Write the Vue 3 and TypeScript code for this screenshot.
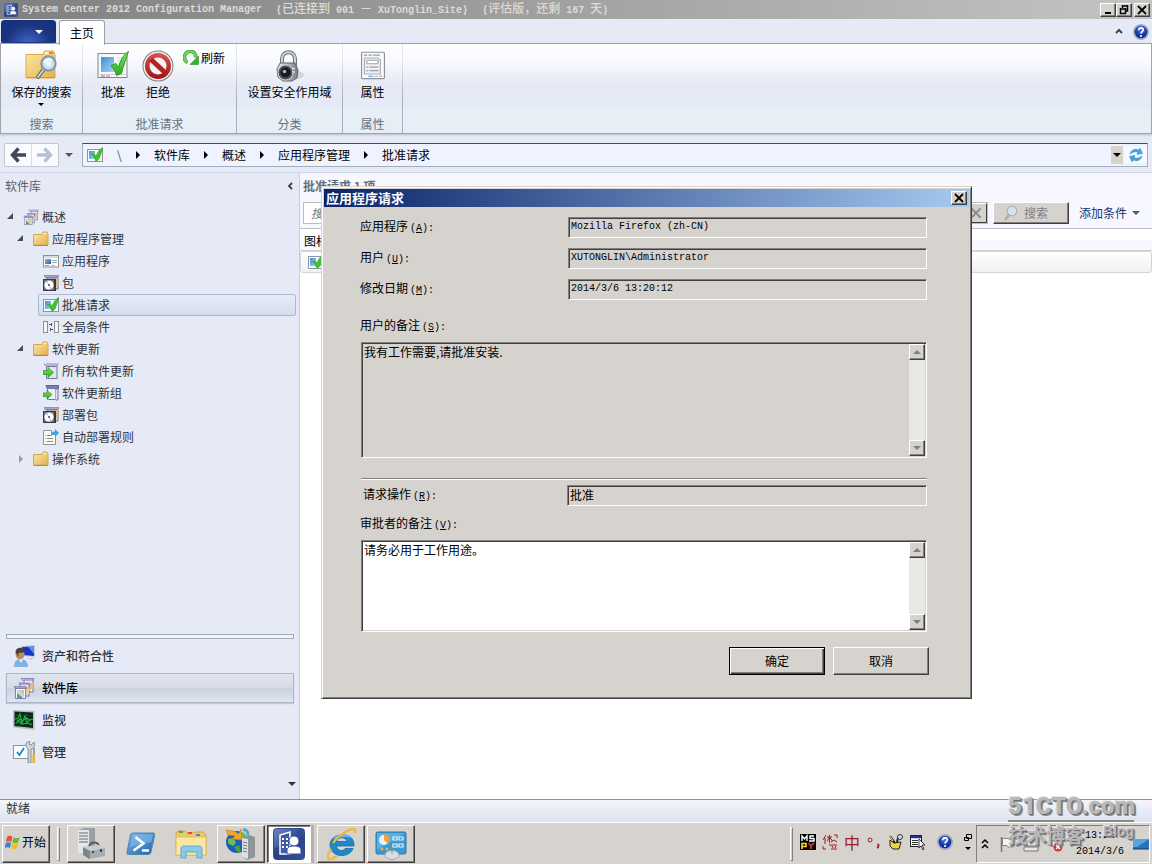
<script setup lang="ts">
interface TreeNode {
  label: string
  icon: string
  level: number
  state?: 'open' | 'closed'
  selected?: boolean
}

const tree: TreeNode[] = [
  { label: '概述', icon: 'library', level: 0, state: 'open' },
  { label: '应用程序管理', icon: 'folder', level: 1, state: 'open' },
  { label: '应用程序', icon: 'application', level: 2 },
  { label: '包', icon: 'package', level: 2 },
  { label: '批准请求', icon: 'approvesmall', level: 2, selected: true },
  { label: '全局条件', icon: 'condition', level: 2 },
  { label: '软件更新', icon: 'folder', level: 1, state: 'open' },
  { label: '所有软件更新', icon: 'update', level: 2 },
  { label: '软件更新组', icon: 'updategroup', level: 2 },
  { label: '部署包', icon: 'package', level: 2 },
  { label: '自动部署规则', icon: 'rule', level: 2 },
  { label: '操作系统', icon: 'folder', level: 1, state: 'closed' },
]

const workspaces = [
  { label: '资产和符合性', icon: 'assets', selected: false },
  { label: '软件库', icon: 'library', selected: true },
  { label: '监视', icon: 'monitor', selected: false },
  { label: '管理', icon: 'admin', selected: false },
]

const crumbs = ['软件库', '概述', '应用程序管理', '批准请求']

const tasks = [
  { label: '服务器管理器', icon: 'server', style: 'raised' },
  { label: 'PowerShell', icon: 'powershell', style: 'flat' },
  { label: '资源管理器', icon: 'explorer', style: 'flat' },
  { label: 'IIS', icon: 'iis', style: 'raised' },
  { label: 'Configuration Manager', icon: 'console', style: 'pressed' },
  { label: 'Internet Explorer', icon: 'ie', style: 'raised' },
  { label: '控制面板', icon: 'control', style: 'raised' },
]

const details = [
  { id: 'f-app', label: '应用程序', key: 'A', value: 'Mozilla Firefox (zh-CN)' },
  { id: 'f-user', label: '用户', key: 'U', value: 'XUTONGLIN\\Administrator' },
  { id: 'f-date', label: '修改日期', key: 'M', value: '2014/3/6 13:20:12' },
]
</script>

<template>
  <div class="screen">
    <svg class="defs" width="0" height="0" aria-hidden="true">
      <defs>
        <linearGradient id="gFolder" x1="0" y1="0" x2="1" y2="1">
          <stop offset="0" stop-color="#fde9a4" /><stop offset="1" stop-color="#e2b04e" />
        </linearGradient>
        <linearGradient id="gBlue" x1="0" y1="0" x2="1" y2="1">
          <stop offset="0" stop-color="#7db8ee" /><stop offset="1" stop-color="#1d62a8" />
        </linearGradient>
        <linearGradient id="gPane" x1="0" y1="0" x2="1" y2="1">
          <stop offset="0" stop-color="#3f8fd8" /><stop offset="1" stop-color="#a8d2f2" />
        </linearGradient>
        <linearGradient id="gNavy" x1="0" y1="0" x2="1" y2="1">
          <stop offset="0" stop-color="#6f88c0" /><stop offset="0.5" stop-color="#2f4b94" /><stop offset="1" stop-color="#4b6fb8" />
        </linearGradient>
        <linearGradient id="gGreen" x1="0" y1="0" x2="0" y2="1">
          <stop offset="0" stop-color="#84e850" /><stop offset="1" stop-color="#2aa824" />
        </linearGradient>
        <linearGradient id="gSteel" x1="0" y1="0" x2="1" y2="0">
          <stop offset="0" stop-color="#eef0f1" /><stop offset="0.5" stop-color="#b4babf" /><stop offset="1" stop-color="#747c84" />
        </linearGradient>
        <linearGradient id="gRed" x1="0" y1="0" x2="0" y2="1">
          <stop offset="0" stop-color="#d85450" /><stop offset="1" stop-color="#a01414" />
        </linearGradient>
        <radialGradient id="gLens"><stop offset="0" stop-color="#ffffff" /><stop offset="1" stop-color="#a9cdea" /></radialGradient>
        <radialGradient id="gHelp" cx="0.5" cy="0.3"><stop offset="0" stop-color="#4d7bea" /><stop offset="1" stop-color="#12309a" /></radialGradient>
      </defs>
      <symbol id="folder" viewBox="0 0 16 16">
        <path d="M.5 3.500h8.500l1-2.500h4l1 2.500V14H.5z" fill="url(#gFolder)" stroke="#d1a75a" />
        <path d="M10.500 2.500h3" stroke="#fff5d0" /><path d="M.5 14.500h14.500" stroke="#b98c3e" />
      </symbol>
      <symbol id="foldersearch" viewBox="0 0 32 32">
        <path d="M1 4.500h17l1.500-3.500h9l1.500 3.500V28H1z" fill="url(#gFolder)" stroke="#d9a94c" />
        <path d="M20 3h4" stroke="#fff3c8" stroke-width="2" /><path d="M24 3h4" stroke="#d8892e" stroke-width="2" /><path d="M2 27.500h27" stroke="#c79a4a" />
        <path d="M18.500 19.500L13 27" stroke="#70747a" stroke-width="4" stroke-linecap="round" />
        <path d="M18.500 19.500L13 27" stroke="#d9dcdf" stroke-width="1.500" stroke-linecap="round" />
        <circle cx="23.500" cy="13.500" r="7.200" fill="url(#gLens)" stroke="#8395ac" stroke-width="2" />
        <path d="M19.500 13a4.500 4.500 0 0 1 7-3" fill="none" stroke="#fff" stroke-width="2" />
      </symbol>
      <symbol id="approve" viewBox="0 0 32 32">
        <rect x="1" y="3.500" width="29" height="24" fill="#f7f8fa" stroke="#80868e" />
        <rect x="4" y="7" width="13" height="15" fill="url(#gPane)" />
        <path d="M20 8h6M20 11h4" stroke="#d6d9de" />
        <path d="M3 24.500h26" stroke="#cfd3d8" /><path d="M4 26h4" stroke="#9aa0a8" stroke-width="1.500" /><path d="M9 26h4" stroke="#e79a9a" stroke-width="1.500" />
        <path d="M14 15.500l5-2 2.500 4C23 11 26 5 31.500 1.500c-2 6-5 13.500-7 22l-5 2c-1-4-3-7-5.500-10z" fill="url(#gGreen)" stroke="#2a9c1e" />
      </symbol>
      <symbol id="approvesmall" viewBox="0 0 16 16">
        <rect x="0.500" y="2.500" width="15" height="12" fill="#fafbfc" stroke="#9096a0" />
        <rect x="2" y="4" width="6" height="8" fill="url(#gPane)" />
        <path d="M4.500 7.500l3-.5 1.500 2.500C10.500 5.500 12.500 2 15.800.5 15 4 13.500 8 12 12L9 14.500C8 11.500 6.500 9.500 4.500 7.500z" fill="#3fc331" stroke="#2fa824" stroke-width="0.700" />
      </symbol>
      <symbol id="deny" viewBox="0 0 32 32">
        <circle cx="16" cy="16" r="15.500" fill="#7d7d80" /><circle cx="16" cy="16" r="14.500" fill="#f0eeee" />
        <circle cx="16" cy="16" r="13" fill="url(#gRed)" /><circle cx="16" cy="16" r="8.500" fill="#f4f4f8" />
        <path d="M9 9.500L23 22.500" stroke="#b82020" stroke-width="5" />
      </symbol>
      <symbol id="refresh" viewBox="0 0 16 16">
        <path d="M4.500 12.800C-1 9 1.500 1.500 7.500 1.500c3.500 0 5.500 2.500 5.300 6" fill="none" stroke="#3ea534" stroke-width="3.600" />
        <path d="M4.500 12.800C-1 9 1.500 1.500 7.500 1.500c3.500 0 5.500 2.500 5.300 6" fill="none" stroke="#6fd858" stroke-width="2" />
        <path d="M15.500 6v8.500H7z" fill="#35b42a" stroke="#2a9422" stroke-width="0.600" />
      </symbol>
      <symbol id="lock" viewBox="0 0 32 32">
        <ellipse cx="23" cy="25" rx="8" ry="4" fill="#b8bcc8" opacity="0.500" />
        <path d="M9 17V9c0-9 13-9 13 0v8" fill="none" stroke="#6a737a" stroke-width="4" /><path d="M9 17V9c0-9 13-9 13 0v8" fill="none" stroke="#cdd5d8" stroke-width="2" />
        <path d="M7 13h15l3 7-1 8-5 3h-9l-5-4-1-8z" fill="url(#gSteel)" stroke="#5e676e" />
        <circle cx="12.500" cy="22.500" r="7.500" fill="#4a5056" stroke="#cdd2d6" /><circle cx="12.500" cy="22.500" r="5" fill="#171b1f" />
        <circle cx="11.500" cy="21.500" r="1.800" fill="#aeb5bb" /><path d="M19 18l3 1M19 22h3" stroke="#f2f4f5" />
      </symbol>
      <symbol id="props" viewBox="0 0 24 28">
        <rect x="2" y="2" width="20" height="23" rx="1" fill="#fafafb" stroke="#8d9196" />
        <path d="M4 4.500h3M8 4.500h3M12 4.500h6" stroke="#9aa0a6" />
        <path d="M4.500 7h12l2 2v12h-14z" fill="#eff1f3" stroke="#a9aeb4" />
        <rect x="6.500" y="9" width="10" height="3" rx="1" fill="#fff" stroke="#9aa0a6" />
        <path d="M6 15h2M6 18h2" stroke="#7fb6cf" /><path d="M9 15h8M9 18h8" stroke="#9aa0a6" />
        <path d="M8 23h4" stroke="#36b4dd" /><path d="M13 23h3M17 23h3" stroke="#c9a0a0" />
      </symbol>
      <symbol id="library" viewBox="0 0 22 22">
        <path d="M10 4l-2-3M20 4l1-3M9 1.500h12" stroke="#8a88c0" fill="none" /><rect x="11" y="3" width="9" height="12" fill="#e9e6f2" stroke="#7a78b4" /><path d="M14 6h6v6h-4z" fill="#e9bd76" />
        <path d="M5 5.500h12l1 2H6z" fill="#a3a1d0" /><rect x="7" y="7" width="9" height="12" fill="#e3e0f0" stroke="#7a78b4" /><path d="M11 10h5v7h-3z" fill="#efc98c" />
        <path d="M1 9.500h12l1 2H2z" fill="#a3a1d0" stroke="#7472ac" stroke-width="0.600" /><rect x="2.500" y="11.500" width="10" height="10" fill="#f8f7fb" stroke="#8280ba" />
        <path d="M4 13h7v7H4z" fill="#c2d9ec" /><path d="M7 13h4v6z" fill="#f2bd55" /><path d="M4 16l6 5H4z" fill="#58a660" />
      </symbol>
      <symbol id="application" viewBox="0 0 16 16">
        <rect x="0.500" y="2.500" width="15" height="11.500" fill="#fcfcfd" stroke="#8b9099" /><path d="M1 4h14" stroke="#b4bac2" />
        <rect x="2" y="6" width="6" height="5" fill="url(#gBlue)" /><path d="M9 7.500h5M9 9.500h5" stroke="#a6abb2" /><path d="M2 12.500h4" stroke="#57b5d5" /><path d="M8 12.500h4" stroke="#b9bec5" />
      </symbol>
      <symbol id="package" viewBox="0 0 16 16">
        <path d="M1 .5h15l-1 2H2z" fill="#a6a5cc" stroke="#6f6e9c" stroke-width="0.600" /><path d="M4 3h11v11H4z" fill="#d5dbe4" stroke="#6f6e8e" /><path d="M12 3h3v8h-3z" fill="#e9b85c" />
        <rect x="0.500" y="4.500" width="11" height="11" fill="#6f7a84" stroke="#3b3b3e" /><path d="M12.500 4v12" stroke="#333" />
        <circle cx="6" cy="10" r="4.600" fill="#fff" /><path d="M6 10L3 7l1.500-1z" fill="#9acdee" /><path d="M6 10l3 3.500-2 1z" fill="#e9b6d8" /><circle cx="6" cy="10" r="1" fill="#4c4c4c" />
      </symbol>
      <symbol id="condition" viewBox="0 0 16 16">
        <rect x="0.500" y="2.500" width="4" height="11" fill="#f4f5f7" stroke="#8b9097" /><rect x="11.500" y="2.500" width="4" height="11" fill="#f4f5f7" stroke="#8b9097" />
        <path d="M6 5.500h3M8.500 4v3M10 10.500H7M7.500 9v3" stroke="#55595f" fill="none" />
      </symbol>
      <symbol id="update" viewBox="0 0 16 16">
        <path d="M1 .5l2 2.500h11l1.500-2.500M3 1h11" stroke="#8482b0" fill="none" /><path d="M3.500 3.500h10.500v12H3.500z" fill="#dfe4ee" stroke="#78769e" />
        <path d="M0 7.500h5V4.500L10.500 9.500 5 14.500V11.500H0z" fill="url(#gGreen)" stroke="#2f962a" stroke-width="0.700" />
      </symbol>
      <symbol id="updategroup" viewBox="0 0 16 16">
        <path d="M3 .5h12.500v3H4z" fill="#7a79b8" stroke="#64639a" /><path d="M4.500 3.500h8v11h-8z" fill="#edf0f6" stroke="#78769e" /><path d="M12.500 4h2.500v11h-2.500" fill="#dfe4ee" stroke="#78769e" />
        <path d="M0 8h4V5.500L9 9.500 4 14V11.500H0z" fill="url(#gGreen)" stroke="#2f962a" stroke-width="0.700" />
      </symbol>
      <symbol id="rule" viewBox="0 0 16 16">
        <path d="M.5 1.500h8v4h4v10H.5z" fill="#fdfdf8" stroke="#8f9499" /><path d="M4 6.500h4M4 9.500h6M4 12.500h6" stroke="#8c8b78" /><path d="M2 6.500h1M2 9.500h1M2 12.500h1" stroke="#d3b43c" />
        <path d="M8 7.500c0-3.500 1-5 4-5V0l4 4-4 4V5.500c-2 0-3 0-4 2z" fill="#3fa4e4" />
      </symbol>
      <symbol id="assets" viewBox="0 0 22 22">
        <path d="M8 1l14-1v12l-13-1z" fill="#c3ccdc" /><path d="M9 2l12-.5V11L10 10z" fill="#1437c4" /><path d="M15 1.800l6-.3V9z" fill="#5a8cf4" /><path d="M13 13h8l-3 2z" fill="#c9cdd2" />
        <path d="M1 22c0-6 3-8 7-8s7 3 7 8z" fill="#7fb2e2" /><path d="M5 13l3 5 3-5z" fill="#eef3f8" /><ellipse cx="7" cy="9" rx="4.500" ry="5.500" fill="#bb8e68" /><path d="M2.500 7c0-5 8-6 9-1-1 3-5 1-6 2v4z" fill="#4c4038" />
      </symbol>
      <symbol id="monitor" viewBox="0 0 22 22">
        <path d="M0 1l21.500 1v19L0 18.500z" fill="#b9bfb9" /><path d="M1.500 2.500l18.500 1v15.500l-18.500-2z" fill="#0d2618" />
        <path d="M2 6.500h18M2 10.500h18M2 14.500h18M7 3v14M13 3v15" stroke="#175c2b" stroke-width="0.600" /><path d="M2 10l3-1 2-4 2 9 3-7 2 7 2-3 4-1M3 14l3-2 3 3 6-1 4 2M4 12l3-2 2 2 5-3 3 3" fill="none" stroke="#1dae42" stroke-width="1.200" />
      </symbol>
      <symbol id="admin" viewBox="0 0 22 22">
        <rect x="0.500" y="4.500" width="15" height="13" fill="#fdfdfe" stroke="#8f949a" /><path d="M4 11l2.500 3L11 7" fill="none" stroke="#1c83cc" stroke-width="1.800" />
        <path d="M15 8v14h3V8c4-1 4-5 3-7l-3 3-2-1 1-3c-4 0-6 5-2 8z" fill="#d0d4d8" stroke="#767b80" stroke-width="0.800" /><path d="M20 7v6h2V7z" fill="#9ba0a6" /><path d="M19.500 13h2.500v9h-2.500z" fill="#e8b23e" />
      </symbol>
      <symbol id="server" viewBox="0 0 32 32">
        <path d="M3 2l6-2h11v22l-8 3H3z" fill="#9aa0a3" /><path d="M3 2h11v23H3z" fill="#e6e8e8" /><path d="M4 5h9M4 8h9M4 11h9M4 14h9" stroke="#8d9396" stroke-width="1.500" />
        <path d="M14 20c0-7 9-7 10-2" fill="none" stroke="#5a5f63" stroke-width="2" /><path d="M8 19l16-2 6 3v8l-16 3-6-4z" fill="#a5adb2" /><path d="M8 19l7 3v9l-7-4z" fill="#7d868c" /><path d="M8 19l16-2 6 3-15 3z" fill="#c9ced1" /><path d="M18 23v2M26 21v3" stroke="#404547" stroke-width="2" />
      </symbol>
      <symbol id="powershell" viewBox="0 0 32 32">
        <path d="M8 5h20c1.500 0 2 1 1.600 2.500L26 24c-.4 1.500-1.300 2.500-3 2.500H3.500C2 26.500 1.700 25.500 2 24L5.500 7C6 5.500 6.600 5 8 5z" fill="url(#gBlue)" stroke="#4c86b7" />
        <path d="M9 6.500h19L26.500 14 5 19 7.500 8z" fill="#8bc3ee" opacity="0.500" /><path d="M10.500 9l8 6.500-10 7M17 22.500h7" fill="none" stroke="#fff" stroke-width="2.500" />
      </symbol>
      <symbol id="explorer" viewBox="0 0 32 32">
        <path d="M1 5l2-2h7l2 2h6l2-1h8l3 3v20H1z" fill="#efc866" stroke="#d0a44a" /><path d="M4 4h4" stroke="#3fae4d" stroke-width="2" /><path d="M13 5h4" stroke="#d94b3b" stroke-width="2" /><path d="M21 7h4" stroke="#3b8cd0" stroke-width="2" />
        <path d="M1 9h30v18H1z" fill="#fae7a4" stroke="#e0bc6c" /><path d="M6 30V21c0-3 2-3 4-3h13c3 0 4 1 4 3v9h-5v-6H11v6z" fill="#8bcae6" stroke="#5ea9cc" />
      </symbol>
      <symbol id="iis" viewBox="0 0 32 32">
        <circle cx="12" cy="14" r="11" fill="#1c5cba" /><path d="M3 11c4-2 7 0 8 4l-3 3-5-3zM14 3c5 1 7 4 8 7l-6 1z" fill="#6fbf50" /><path d="M9 19l5-2 2 6-3 2z" fill="#47a13e" />
        <path d="M1 2l8 1 5 3 2-5 1 11-10-1 3-3-7-1z" fill="#f1a528" stroke="#c97c18" stroke-width="0.600" /><path d="M18 1.500c4 0 5 3 5 6" fill="none" stroke="#4cabd8" stroke-width="3" />
        <path d="M17 10l7-3 6 2v20l-8 3-5-3z" fill="#8e9599" /><path d="M17 10l6 1v20l-6-2z" fill="#dcdfe0" /><path d="M18 14l4 1M18 17l4 1M18 20l4 1M18 23l4 1" stroke="#767c80" />
      </symbol>
      <symbol id="console" viewBox="0 0 32 32">
        <rect x="0.500" y="0.500" width="31" height="31" rx="3" fill="url(#gNavy)" stroke="#324b8c" /><path d="M1 20Q18 17 31 6v22q0 3-3 3H4q-3 0-3-3z" fill="#1d3579" opacity="0.500" />
        <path d="M7 7l10-3v22H7z" fill="#3d5ca6" stroke="#fff" stroke-width="1.500" /><path d="M9 10h2v2H9zM13 10h2v2h-2zM9 14h2v2H9zM13 14h2v2h-2zM9 18h2v2H9zM13 18h2v2h-2z" fill="#fff" />
        <circle cx="21" cy="13" r="5" fill="#fff" stroke="#345198" /><path d="M14 26v-4c0-3 3-4 7-4s7 1 7 4v4z" fill="#fff" stroke="#345198" />
      </symbol>
      <symbol id="ie" viewBox="0 0 32 32">
        <path d="M29 18H11.500c.5 5 7 6 8.500 2.500h8C25 30 6 31 5 17 5 4 30 2 29 18zm-7-4.500c-1-5-9.500-5-10.500 0z" fill="#1f87cb" stroke="#196cab" stroke-width="0.800" />
        <path d="M8 12c3-7 14-8 18-2-6-2-12-1-18 2z" fill="#7cc6ee" opacity="0.800" />
        <path d="M6 21C-1 33 5 33 12 28M8 15C16 4 33-4 30 5" fill="none" stroke="#edb936" stroke-width="2.200" />
      </symbol>
      <symbol id="control" viewBox="0 0 32 32">
        <rect x="1" y="4" width="30" height="22" rx="1.500" fill="#379bd4" stroke="#2a78a8" /><path d="M2 5h28L2 22z" fill="#70c0ea" opacity="0.600" />
        <circle cx="9" cy="12" r="5" fill="#e8f3fa" /><path d="M9 12V6a6 6 0 0 1 4 10z" fill="#eea23c" />
        <path d="M18 9h4v3h-4zM24 9h4v3h-4zM18 16h4v3h-4zM24 16h4v3h-4z" fill="none" stroke="#e9f6fc" stroke-width="1.200" /><circle cx="7" cy="21" r="1.500" fill="#f0b04c" /><circle cx="12" cy="21" r="1.500" fill="#f0b04c" />
        <ellipse cx="17" cy="27" rx="7" ry="4.500" fill="#d9dddf" stroke="#a2a8ac" /><path d="M17 22v4" stroke="#8b9195" />
      </symbol>
      <symbol id="help" viewBox="0 0 16 16">
        <circle cx="8" cy="8" r="7.800" fill="#8a90a0" /><circle cx="8" cy="8" r="7" fill="#d2daf0" /><circle cx="8" cy="8" r="6.500" fill="url(#gHelp)" />
        <path d="M5.600 6.200C5.800 3 10.600 3.200 10.300 6 10.200 7.500 8 7.800 8 9.600" fill="none" stroke="#fff" stroke-width="1.700" /><circle cx="8" cy="12" r="1.100" fill="#fff" />
      </symbol>
      <symbol id="sync" viewBox="0 0 16 16">
        <path d="M2 7c1-4 5-6 9-4l1-2 2.500 5.500L9 7.500l1-2C7 4 5 5 2 7z" fill="#45a4e0" stroke="#2b84bd" stroke-width="0.500" /><path d="M14 9c-1 4-5 6-9 4l-1 2-2.500-5.500L7 8.500l-1 2c3 1.500 5 .5 8-1.500z" fill="#45a4e0" stroke="#2b84bd" stroke-width="0.500" />
      </symbol>
      <symbol id="back" viewBox="0 0 16 16"><path d="M8.500 1.500L2.500 8l6 6.500M3 8h13" fill="none" stroke="currentColor" stroke-width="3.400" /></symbol>
      <symbol id="cross" viewBox="0 0 12 12"><path d="M2 2l8 8M10 2l-8 8" stroke="currentColor" stroke-width="1.800" /></symbol>
      <symbol id="glass" viewBox="0 0 16 16"><path d="M6 10l-4 5" stroke="#b5a99a" stroke-width="2.500" /><circle cx="9" cy="6" r="4.800" fill="#d7e2ea" stroke="#a9b2ba" stroke-width="1.200" /></symbol>
      <symbol id="winflag" viewBox="0 0 16 16">
        <path d="M2 3c2-2 4-1 5.500 0L6.300 8C4.500 7 3 7 1 8z" fill="#e2592b" /><path d="M8.500 3.500c2 1 4 1 6-.5l-1.200 5c-2 1.500-4 1.500-6 .5z" fill="#74b62e" /><path d="M.7 9c2-1 3.800-1 5.400 0l-1.200 5c-1.600-1-3.400-1-5 .3z" fill="#3c7fd8" /><path d="M7 9.500c2 1 4 1 6-.5l-1.200 5c-2 1.500-4 1.500-6 .5z" fill="#f4bb2a" />
      </symbol>
    </svg>

    <header class="titlebar">
      <svg class="i14"><use href="#console" /></svg>
      <h1 class="caption">
        <span>System Center 2012 Configuration Manager</span>
        <span>(<span class="cjk">已连接到</span> 001 <span class="cjk">－</span> XuTonglin_Site)</span>
        <span>(<span class="cjk">评估版，还剩</span> 167 <span class="cjk">天</span>)</span>
      </h1>
      <div class="winbtns">
        <button class="wb" type="button" aria-label="最小化"><svg class="i12" viewBox="0 0 12 12"><path d="M3 9h6" stroke="#000" stroke-width="2" /></svg></button>
        <button class="wb" type="button" aria-label="还原"><svg class="i12" viewBox="0 0 12 12"><path d="M4 2h6M4.500 1v3M9.500 1v6H8M2 5h6M2.500 4v5.500h5V4" fill="none" stroke="#000" stroke-width="1.500" /></svg></button>
        <button class="wb last" type="button" aria-label="关闭"><svg class="i12"><use href="#cross" /></svg></button>
      </div>
    </header>

    <nav class="tabs">
      <button class="filemenu" type="button" aria-label="应用程序菜单"><span class="tri-down"></span></button>
      <button class="tab" type="button">主页</button>
      <span class="grow"></span>
      <button class="plain" type="button" aria-label="折叠功能区"><svg class="i12" viewBox="0 0 12 12"><path d="M3 7l3-3 3 3" fill="none" stroke="#3c4657" stroke-width="2" /></svg></button>
      <button class="plain help" type="button" aria-label="帮助"><svg class="i16"><use href="#help" /></svg></button>
    </nav>

    <section class="ribbon">
      <div class="group g-search">
        <div class="cmds">
          <button class="cmd" type="button"><svg class="i32"><use href="#foldersearch" /></svg><span>保存的搜索</span><span class="tri-down small"></span></button>
        </div>
        <div class="gname">搜索</div>
      </div>
      <div class="group g-approve">
        <div class="cmds">
          <button class="cmd" type="button"><svg class="i32"><use href="#approve" /></svg><span>批准</span></button>
          <button class="cmd" type="button"><svg class="i32"><use href="#deny" /></svg><span>拒绝</span></button>
          <button class="cmd inline" type="button"><svg class="i16"><use href="#refresh" /></svg><span>刷新</span></button>
        </div>
        <div class="gname">批准请求</div>
      </div>
      <div class="group g-class">
        <div class="cmds"><button class="cmd" type="button"><svg class="i32"><use href="#lock" /></svg><span>设置安全作用域</span></button></div>
        <div class="gname">分类</div>
      </div>
      <div class="group g-props">
        <div class="cmds"><button class="cmd" type="button"><svg class="i32"><use href="#props" /></svg><span>属性</span></button></div>
        <div class="gname">属性</div>
      </div>
    </section>

    <nav class="address">
      <div class="history">
        <button type="button" class="hist" aria-label="后退"><svg class="i16"><use href="#back" /></svg></button>
        <button type="button" class="hist fwd" aria-label="前进"><svg class="i16"><use href="#back" /></svg></button>
      </div>
      <button class="plain recent" type="button" aria-label="最近的位置"><span class="tri-down gray"></span></button>
      <div class="path">
        <svg class="i16"><use href="#approvesmall" /></svg>
        <span class="root">\</span>
        <template v-for="c in crumbs" :key="c"><span class="tri-right"></span><a class="crumb" href="#">{{ c }}</a></template>
        <span class="grow"></span>
        <button class="drop" type="button" aria-label="显示路径"><span class="tri-down"></span></button>
        <button class="sync" type="button" aria-label="刷新"><svg class="i16"><use href="#sync" /></svg></button>
      </div>
    </nav>

    <main class="body">
      <aside class="side">
        <div class="sidehead"><span>软件库</span><button class="plain" type="button" aria-label="折叠"><svg class="i8" viewBox="0 0 8 8"><path d="M6 1L3 4l3 3" fill="none" stroke="#3a3f48" stroke-width="1.800" /></svg></button></div>
        <ul class="tree">
          <li v-for="n in tree" :key="n.label" :class="['lv' + n.level, { selected: n.selected }]">
            <span v-if="n.level < 2" :class="['twist', n.state]"></span>
            <a class="node" href="#"><svg class="i16"><use :href="'#' + n.icon" /></svg><span>{{ n.label }}</span></a>
          </li>
        </ul>
        <div class="split"></div>
        <div class="spaces">
          <button v-for="w in workspaces" :key="w.label" type="button" :class="['space', { selected: w.selected }]"><svg class="i22"><use :href="'#' + w.icon" /></svg><span>{{ w.label }}</span></button>
        </div>
        <div class="more"><button class="plain" type="button" aria-label="更多"><span class="tri-down"></span></button></div>
      </aside>

      <section class="list">
        <div class="listhead">
          <h2>批准请求 1 项</h2>
          <div class="searchrow">
            <div class="searchbox"><input type="text" placeholder="搜索" aria-label="搜索" /><button class="clear" type="button" aria-label="清除"><svg class="i14"><use href="#cross" /></svg></button></div>
            <button class="find" type="button"><svg class="i16"><use href="#glass" /></svg><span>搜索</span></button>
            <button class="addcond" type="button"><span>添加条件</span><span class="tri-down gray"></span></button>
          </div>
        </div>
        <table class="grid">
          <thead><tr><th>图标</th></tr></thead>
          <tbody><tr><td><svg class="i16"><use href="#approvesmall" /></svg></td></tr></tbody>
        </table>
      </section>
    </main>

    <footer class="status">就绪</footer>

    <footer class="taskbar">
      <button class="start" type="button"><svg class="i16"><use href="#winflag" /></svg><span>开始</span></button>
      <span class="grip"></span>
      <div class="tasks">
        <button v-for="t in tasks" :key="t.icon" type="button" :class="['task', t.style]" :aria-label="t.label"><svg class="i32"><use :href="'#' + t.icon" /></svg></button>
      </div>
      <span class="grow"></span>
      <span class="grip"></span>
      <div class="ime">
        <svg class="i16" viewBox="0 0 16 16"><path d="M0 0h16v16H0z" fill="#000" /><path d="M2 7V2l2.500 3L7 2v5M14 2h-4v2.500h4V7H9" fill="none" stroke="#fff" stroke-width="1.400" /><path d="M2 15V9.500h4v3H2" fill="none" stroke="#f6e034" stroke-width="1.600" /><path d="M8.500 9l2.500 3 3-3M11 12v3" fill="none" stroke="#e33022" stroke-width="1.800" /></svg>
        <svg class="i16" viewBox="0 0 16 16"><path d="M4 1L1 6M3 4v6M5 3h5M7.500 1v8M7.500 3L5 7M7.500 3l3 4M12 1h3v3M1 12v3h3M7 11h8M9 8l3-2 3 2M9 15h6M10 12l1 2M14 12l-1 2" fill="none" stroke="#9b2020" /></svg>
        <span class="zh">中</span>
        <svg class="i16" viewBox="0 0 16 16"><circle cx="4" cy="6" r="2" fill="none" stroke="#9b2020" /><path d="M11.500 10c2 1 1 3-.5 4" fill="none" stroke="#9b2020" stroke-width="1.800" /></svg>
        <svg class="i16" viewBox="0 0 16 16"><path d="M2 6l4 3 7-1-2 7H5L2 12z" fill="#ecd83e" stroke="#222" /><path d="M2 2l5 7M9 8l1-4" stroke="#222" stroke-width="2" /><circle cx="12" cy="3" r="2.500" fill="#cde" stroke="#333" /><path d="M2 2l3 5" stroke="#f4e050" /></svg>
        <svg class="i16" viewBox="0 0 16 16"><rect x="0.500" y="1.500" width="11" height="11" fill="#fff" stroke="#222" /><path d="M1 3h10" stroke="#1b2f96" stroke-width="2.500" /><path d="M2 6.500h6M2 8.500h6M2 10.500h6" stroke="#333" /><path d="M9 5v9l2-2 2 4 1-1-2-4h3z" fill="#fff" stroke="#111" stroke-width="0.800" /></svg>
        <svg class="i16 helpico"><use href="#help" /></svg>
        <span class="imectl"><svg class="i8" viewBox="0 0 8 8"><path d="M2.500.5h5v4h-5zM.5 3.500h4v3h-4z" fill="#d6d3ce" stroke="#000" /></svg><span class="tri-down small"></span></span>
      </div>
      <div class="tray">
        <svg class="i12" viewBox="0 0 12 12"><path d="M3 5l3-3 3 3M3 10l3-3 3 3" fill="none" stroke="#000" stroke-width="1.500" /></svg>
        <svg class="i16" viewBox="0 0 16 16"><path d="M2.500 1v15" stroke="#777" stroke-width="1.500" /><path d="M3.500 2.500h6l1 1.500h4v7H9L8 9.500H3.500z" fill="#f5f5f5" stroke="#888" /></svg>
        <svg class="i16" viewBox="0 0 16 16"><path d="M4 1h9v9H4zM1 11h14v4H1z" fill="#e8e8e8" stroke="#777" /></svg>
        <svg class="i16" viewBox="0 0 16 16"><path d="M1 5h4l4-4v12L5 9H1z" fill="#eee" stroke="#888" /><circle cx="11" cy="11" r="4.500" fill="#d53428" /><path d="M9 9l4 4M13 9l-4 4" stroke="#fff" stroke-width="1.500" /></svg>
        <time class="clock"><span>13:21</span><span>2014/3/6</span></time>
        <svg class="i16" viewBox="0 0 16 16"><path d="M0 3h16v10H0z" fill="#2473bd" /><path d="M0 3h16L4 11H0z" fill="#57a5df" /><path d="M0 13h16" stroke="#123c68" /></svg>
      </div>
    </footer>

    <div class="watermark" aria-hidden="true">
      <div class="wm-main">51CTO.com</div>
      <div class="wm-sub"><span>技术博客</span><span class="wm-blog">Blog</span></div>
    </div>

    <form class="dialog" role="dialog" aria-labelledby="dlg-title" @submit.prevent>
      <div class="dlgbar"><h2 id="dlg-title">应用程序请求</h2><button class="wb" type="button" aria-label="关闭"><svg class="i12"><use href="#cross" /></svg></button></div>
      <div class="dlgbody">
        <div class="rows">
          <div v-for="d in details" :key="d.id" class="row">
            <label :for="d.id">{{ d.label }}<span class="lat">(<u>{{ d.key }}</u>):</span></label>
            <input :id="d.id" class="field lat" type="text" readonly :value="d.value" />
          </div>
        </div>
        <label class="block" for="f-note">用户的备注<span class="lat">(<u>S</u>):</span></label>
        <div class="memo">
          <textarea id="f-note" class="ro" readonly>我有工作需要,请批准安装.</textarea>
          <div class="bar"><button type="button" aria-label="向上"><span class="tri-up"></span></button><button type="button" aria-label="向下"><span class="tri-down dim"></span></button></div>
        </div>
        <hr />
        <div class="row act">
          <label for="f-act">请求操作<span class="lat">(<u>R</u>):</span></label>
          <input id="f-act" class="field" type="text" readonly value="批准" />
        </div>
        <label class="block second" for="f-reply">审批者的备注<span class="lat">(<u>V</u>):</span></label>
        <div class="memo reply">
          <textarea id="f-reply">请务必用于工作用途。</textarea>
          <div class="bar"><button type="button" aria-label="向上"><span class="tri-up"></span></button><button type="button" aria-label="向下"><span class="tri-down dim"></span></button></div>
        </div>
        <div class="actions"><button class="btn default" type="submit">确定</button><button class="btn" type="button">取消</button></div>
      </div>
    </form>
  </div>
</template>

<style>
body { margin: 0; }
</style>

<style scoped>
.screen {
  position: relative;
  display: flex;
  flex-direction: column;
  min-height: 100vh;
  overflow: hidden;
  background: #e6eaf6;
  color: #000;
  font: 12px/16px "Noto Sans CJK SC", sans-serif;
}
* { box-sizing: border-box; }
svg { display: block; flex: none; }
button, input, textarea { font: inherit; color: inherit; margin: 0; padding: 0; border-radius: 0; outline: none; }
button { border: 0; background: none; }
a { color: inherit; text-decoration: none; }
h1, h2 { margin: 0; font-size: 12px; }
.i8 { width: 8px; height: 8px; }
.i12 { width: 12px; height: 12px; }
.i14 { width: 14px; height: 14px; }
.i16 { width: 16px; height: 16px; }
.i22 { width: 22px; height: 22px; }
.i32 { width: 32px; height: 32px; }
.grow { flex: 1; }
.lat { font-family: "Liberation Mono", monospace; font-size: 10px; }
label .lat { margin-left: 2px; }
.plain { display: flex; align-items: center; justify-content: center; }
.tri-down { width: 0; height: 0; border: 4px solid transparent; border-top-color: currentColor; border-bottom: 0; }
.tri-down.small { border-width: 3px 3px 0; }
.tri-down.gray { color: #555a62; }
.tri-down.dim { color: #808080; }
.tri-up { width: 0; height: 0; border: 4px solid transparent; border-bottom-color: #808080; border-top: 0; }
.tri-right { width: 0; height: 0; border: 4px solid transparent; border-left-color: #000; border-right: 0; }

.titlebar { display: flex; align-items: center; height: 19px; padding: 0 2px 0 4px; gap: 4px; background: linear-gradient(90deg, #808080, #c4c4c4); color: #dedbd5; }
.caption { flex: 1; display: flex; gap: 14px; padding-top: 2px; font: bold 10px/16px "Liberation Mono", monospace; white-space: pre; }
.cjk { font-family: "Noto Sans CJK SC", sans-serif; font-size: 12px; font-weight: 500; line-height: 12px; }
.winbtns { display: flex; }
.wb { display: flex; align-items: center; justify-content: center; width: 16px; height: 14px; background: #d6d3ce; color: #000; border: 1px solid; border-color: #fff #404040 #404040 #fff; box-shadow: inset -1px -1px #808080; }
.wb.last { margin-left: 2px; }

.tabs { display: flex; align-items: stretch; height: 24px; padding: 1px 3px 0 1px; }
.filemenu { display: flex; align-items: center; justify-content: center; width: 55px; padding-left: 20px; color: #fff; background: radial-gradient(ellipse at 50% 110%, #3d68c8, #1b3480 60%, #14307c); border: 1px solid #16307c; border-radius: 3px 3px 0 0; }
.tab { width: 46px; margin: 0 0 -2px 3px; background: #fff; border: 1px solid #9aa0ac; border-bottom: 0; border-radius: 3px 3px 0 0; z-index: 1; }
.help { margin-left: 8px; }

.ribbon { display: flex; height: 91px; border: 1px solid #9fa3aa; background: linear-gradient(#fff, #f7f8ff 24%, #eef0f6 34%, #e6eaf6 46%, #e6eaf6 72%, #e6eff6 74%); box-shadow: 0 1px 2px #b8bcc6; }
.group { display: flex; flex-direction: column; justify-content: space-between; border-right: 1px solid; border-image: linear-gradient(#e4e6ee 20%, #a9b0bd 60%) 1; }
.g-search { width: 82px; }
.g-approve { width: 154px; }
.g-class { width: 106px; }
.g-props { width: 60px; }
.cmds { display: flex; justify-content: center; padding-top: 6px; }
.g-approve .cmds { justify-content: flex-start; padding-left: 14px; gap: 13px; }
.cmd { display: flex; flex-direction: column; align-items: center; gap: 2px; white-space: nowrap; }
.cmd .small { margin-top: 1px; }
.cmd.inline { flex-direction: row; align-self: flex-start; margin-left: -4px; }
.gname { text-align: center; color: #667080; height: 17px; }

.address { display: flex; align-items: stretch; padding: 9px 4px 5px; height: 38px; }
.history { display: flex; width: 55px; background: #fafbff; border: 1px solid #c2c7d4; border-radius: 2px; }
.hist { flex: 1; display: flex; align-items: center; justify-content: center; color: #3d4757; }
.fwd { color: #b4c1d6; border-right: 1px solid #d8deea; transform: scaleX(-1); }
.recent { width: 20px; }
.path { flex: 1; display: flex; align-items: center; margin-left: 3px; padding: 0 0 0 4px; background: #eef3ff; border: 1px solid #a4adbc; border-top-color: #3f4a5c; }
.root { width: 33px; padding-left: 14px; color: #555; }
.crumb { margin: 0 14px; }
.drop { display: flex; align-items: center; justify-content: center; width: 12px; height: 18px; background: #d6d3ce; }
.sync { display: flex; align-items: center; justify-content: center; width: 22px; margin: 1px 0 1px 2px; background: #f6f9ff; }

.body { flex: 1; display: flex; border-top: 1px solid #cdd4e4; }
.side { display: flex; flex-direction: column; width: 300px; border-right: 1px solid #c6cede; color: #303338; }
.sidehead { display: flex; justify-content: space-between; align-items: center; height: 26px; padding: 0 5px; color: #56606e; }
.tree { list-style: none; margin: 7px 0 0; padding: 0 3px; flex: 1; }
.tree li { display: flex; align-items: center; height: 22px; border: 1px solid transparent; border-radius: 2px; }
.lv0 { padding-left: 3px; }
.lv1 { padding-left: 13px; }
.lv2 { margin-left: 35px; padding-left: 4px; }
.tree li.selected { background: linear-gradient(#e8eef6, #d3dcec); border-color: #a9b9d2; }
.twist { width: 16px; height: 8px; }
.twist.open::before { content: ""; display: block; width: 0; height: 0; border-left: 6px solid transparent; border-bottom: 6px solid #4a4d52; }
.twist.closed::before { content: ""; display: block; width: 0; height: 0; margin-left: 2px; border: 4px solid transparent; border-left-color: #9a9ca2; border-right: 0; }
.node { display: flex; align-items: center; gap: 3px; }
.split { height: 5px; margin: 0 5px 0 6px; background: #f1f3f8; border: 1px solid #a3aab8; }
.spaces { padding: 1px 5px 0 6px; }
.space { display: flex; align-items: center; gap: 7px; width: 100%; height: 30px; margin: 1px 0 2px; padding-left: 6px; border: 1px solid transparent; font-weight: 500; }
.space.selected { color: #000; border-color: #abb8cc; background: linear-gradient(#e1e5ee, #d7dbe5 48%, #ccd3df 52%, #dfe4ee); box-shadow: 0 1px 1px #c2c8d4; }
.more { display: flex; justify-content: flex-end; align-items: center; height: 30px; padding-right: 3px; }

.list { flex: 1; background: #fff; }
.listhead { padding: 4px 12px 4px 3px; background: #f7f8ff; border-bottom: 1px solid #c0c0c4; }
.listhead h2 { height: 18px; color: #656d7a; line-height: 18px; }
.searchrow { display: flex; align-items: center; margin-top: 7px; height: 22px; }
.searchbox { flex: 1; display: flex; background: #fff; border: 1px solid #b9bcc4; height: 22px; }
.searchbox input { flex: 1; min-width: 0; border: 0; padding-left: 7px; background: none; font-style: italic; }
.searchbox input::placeholder { color: #70747a; opacity: 1; }
.clear { display: flex; align-items: center; justify-content: center; width: 22px; color: #909090; background: #d6d3ce; border: 1px solid; border-color: #fff #404040 #404040 #fff; }
.find { display: flex; align-items: center; gap: 5px; width: 76px; height: 22px; margin-left: 5px; padding-left: 9px; color: #808080; background: #d6d3ce; border: 1px solid; border-color: #fff #404040 #404040 #fff; box-shadow: inset -1px -1px #808080; }
.addcond { display: flex; align-items: center; gap: 5px; margin-left: 10px; color: #12306e; }
.grid { width: 100%; border-spacing: 0; }
.grid th { height: 22px; padding: 2px 4px 0; text-align: left; font-weight: normal; background: linear-gradient(#fff 50%, #f7f8ff 50%); border-bottom: 1px solid #d0d0d4; }
.grid td { height: 22px; padding: 0 7px; background: linear-gradient(#fff, #f0eff2); border: 1px solid #d6d3da; border-radius: 3px; }

.status { height: 23px; padding: 0 6px; border-top: 1px solid #8c909a; background: linear-gradient(#f4f6fc, #dce1ef); color: #303030; }
.taskbar { display: flex; align-items: center; height: 42px; padding: 0 2px; background: #d6d3ce; border-top: 1px solid #fff; }
.start, .task { display: flex; align-items: center; justify-content: center; height: 38px; border: 1px solid transparent; }
.start, .raised { border-color: #fff #404040 #404040 #fff; box-shadow: inset -1px -1px #808080; }
.start { width: 48px; gap: 1px; padding: 0 1px 3px 0; }
.grip { width: 3px; height: 34px; margin: 0 7px; border: 1px solid; border-color: #fff #808080 #808080 #fff; }
.tasks { display: flex; gap: 2px; }
.task { width: 48px; }
.pressed { width: 44px; margin-right: 4px; background: #fff; border-color: #404040 #fff #fff #404040; box-shadow: inset 1px 1px #808080, 3px 0 #b5b2ad; }
.ime { display: flex; align-items: center; gap: 6px; height: 38px; padding-bottom: 4px; }
.zh { width: 16px; font-size: 16px; color: #9b2020; }
.helpico { margin-left: 5px; }
.imectl { display: flex; flex-direction: column; align-items: center; gap: 5px; margin: 0 4px 0 5px; }
.tray { display: flex; align-items: center; gap: 8px; width: 174px; height: 38px; padding: 0 0 0 2px; border: 1px solid; border-color: #808080 #fff #fff #808080; }
.clock { flex: 1; display: flex; flex-direction: column; align-items: center; padding-left: 4px; font: 10px/16px "Liberation Mono", monospace; }

.watermark { position: absolute; right: 18px; bottom: 16px; width: 126px; color: #b8b8b8; text-shadow: 1px 1px #707070, 2px 2px #909090, -1px -1px #e6e6e6; pointer-events: none; }
.wm-main { font: 900 24px/28px Roboto, "Liberation Sans", sans-serif; border-bottom: 2px solid #8a8a8a; }
.wm-sub { display: flex; justify-content: space-between; font: bold 19px/26px "Noto Sans CJK SC", sans-serif; }
.wm-blog { font: bold 14px/18px "Liberation Sans", sans-serif; }

.dialog { position: absolute; left: 321px; top: 186px; width: 651px; background: #d6d3ce; border: 1px solid; border-color: #d6d3ce #404040 #404040 #d6d3ce; box-shadow: inset 1px 1px #fff, inset -1px -1px #808080; padding: 2px; }
.dlgbar { display: flex; align-items: center; justify-content: space-between; height: 18px; padding: 0 2px; background: linear-gradient(90deg, #0a246a, #a6caf0); color: #fff; }
.dlgbar h2 { font-size: 13px; line-height: 16px; }
.dlgbody { display: flex; flex-direction: column; padding: 10px 42px 21px 37px; }
.rows { display: flex; flex-direction: column; gap: 10px; }
.row { display: flex; align-items: center; height: 21px; }
.row label { width: 208px; margin-left: -1px; }
.field { flex: 1; min-width: 0; height: 21px; padding: 0 2px 2px; background: #d6d3ce; border: 1px solid; border-color: #808080 #fff #fff #808080; box-shadow: inset 1px 1px #404040; }
.block { height: 16px; line-height: 16px; margin: 17px 0 9px -1px; }
.memo { display: flex; height: 116px; background: #d6d3ce; border: 1px solid; border-color: #808080 #fff #fff #808080; box-shadow: inset 1px 1px #404040; padding: 1px; }
.memo textarea { flex: 1; resize: none; border: 0; padding: 0 1px; background: #fff; line-height: 16px; overflow: hidden; }
.memo textarea.ro { background: #d6d3ce; }
.bar { display: flex; flex-direction: column; justify-content: space-between; width: 16px; background: #e9e8e5; }
.bar button { display: flex; align-items: center; justify-content: center; height: 16px; background: #d6d3ce; border: 1px solid; border-color: #fff #404040 #404040 #fff; box-shadow: inset -1px -1px #808080; }
hr { width: 100%; height: 2px; margin: 20px 0 5px; border: 0; border-top: 1px solid #808080; border-bottom: 1px solid #fff; }
.act label { margin-left: 2px; width: 204px; }
.second { margin: 9px 0 9px -1px; }
.reply { height: 92px; }
.actions { display: flex; justify-content: flex-end; gap: 8px; margin: 15px -2px 0 0; }
.btn { width: 96px; height: 28px; border: 1px solid; border-color: #fff #404040 #404040 #fff; box-shadow: inset -1px -1px #808080; }
.btn.default { border-color: #000; box-shadow: inset 1px 1px #fff, inset -1px -1px #404040, inset -2px -2px #808080; }
</style>
